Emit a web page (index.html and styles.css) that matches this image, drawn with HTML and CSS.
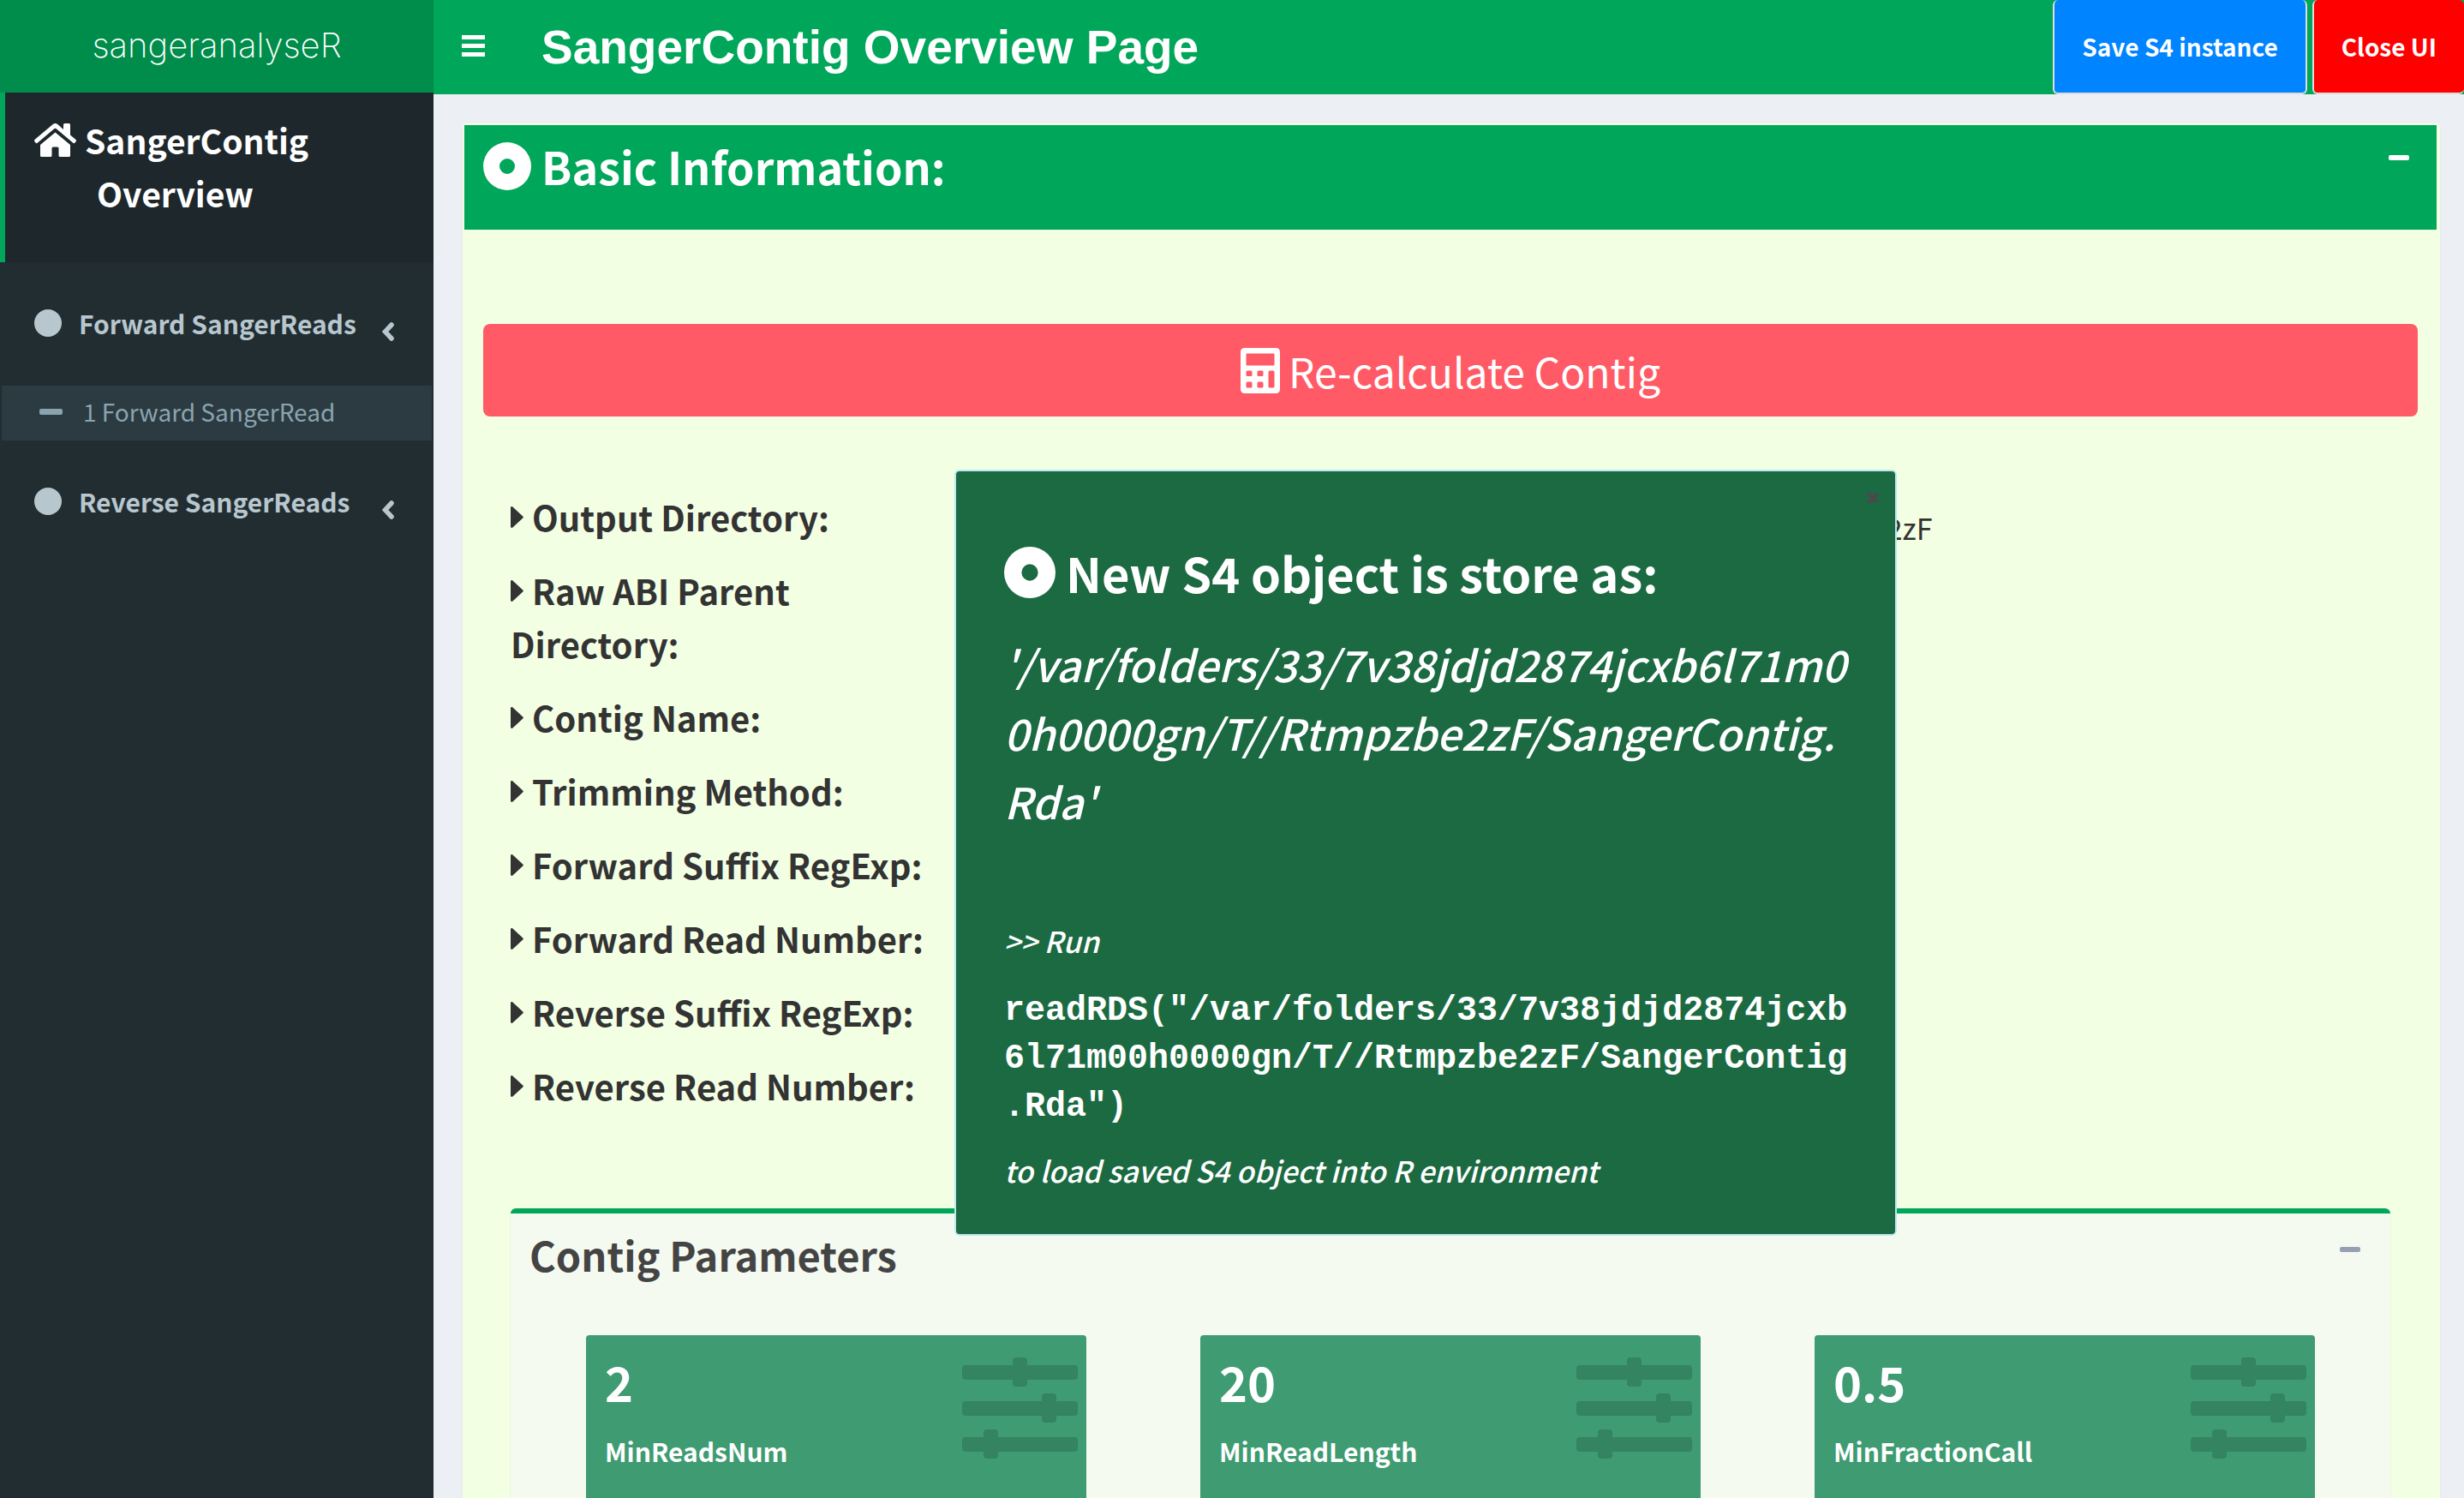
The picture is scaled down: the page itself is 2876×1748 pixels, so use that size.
FILE: index.html
```html
<!DOCTYPE html>
<html lang="en">
<head>
<meta charset="utf-8">
<title>SangerContig Overview Page</title>
<link rel="stylesheet" href="styles.css">
</head>
<body>
<svg class="sprite" aria-hidden="true">
  <symbol id="dot-circle" viewBox="0 0 56 56"><path fill-rule="evenodd" d="M28 0a28 28 0 1 0 0 56a28 28 0 1 0 0-56zM28 19a9 9 0 1 1 0 18a9 9 0 1 1 0-18z"/></symbol>
  <symbol id="caret" viewBox="0 0 15 25"><path d="M0 1.5v22c0 1.3 1.4 1.9 2.4 1l11.9-11c.7-.6.7-1.4 0-2L2.4.5C1.400-.4 0 .2 0 1.500z"/></symbol>
  <symbol id="chevron" viewBox="0 0 14 22"><path d="M11 3L3.500 11L11 19" fill="none" stroke="currentColor" stroke-width="5.500" stroke-linecap="round"/></symbol>
  <symbol id="sliders" viewBox="0 0 135 119"><path d="M4 9h55V4q0-4 4-4h9q4 0 4 4v5h55q4 0 4 4v9q0 4-4 4H76v4q0 4-4 4h-9q-4 0-4-4v-4H4q-4 0-4-4v-9q0-4 4-4zM4 51h89v-5q0-4 4-4h9q4 0 4 4v5h21q4 0 4 4v9q0 4-4 4h-21v4q0 4-4 4h-9q-4 0-4-4v-4H4q-4 0-4-4v-9q0-4 4-4zM4 93h21v-5q0-4 4-4h9q4 0 4 4v5h89q4 0 4 4v9q0 4-4 4H42v4q0 4-4 4h-9q-4 0-4-4v-4H4q-4 0-4-4v-9q0-4 4-4z"/></symbol>
</svg>
<div class="shell">
  <aside class="sidebar">
    <a class="logo" href="#">sangeranalyseR</a>
    <nav class="menu">
      <a class="menu-active" href="#">
        <svg class="icon-home" viewBox="0 0 49 39"><path d="M24.500 0q1.500 0 2.700 1L34 7V1.500q0-1.500 1.500-1.500h5q1.500 0 1.500 1.500V13.500l6.300 5.300q1.200 1.200.2 2.500l-1 1.200q-1.100 1.200-2.500.1L25.700 6.300q-1.200-1-2.400 0L4 22.600q-1.400 1.100-2.500-.1l-1-1.200q-1-1.300.2-2.500L21.800 1Q23 0 24.500 0z"/><path d="M24.500 10.500L7 25v12.500Q7 39 8.500 39H19q1.500 0 1.500-1.500V29q0-1.500 1.500-1.500h5q1.500 0 1.500 1.500v8.500q0 1.500 1.500 1.500h10.500q1.500 0 1.500-1.500V25z"/></svg>
        <span>SangerContig<span class="menu-second">Overview</span></span>
      </a>
      <a class="menu-item" href="#"><span class="bullet"></span><span class="menu-label">Forward SangerReads</span><svg class="chevron"><use href="#chevron"/></svg></a>
      <a class="menu-sub" href="#"><span class="dash"></span>1 Forward SangerRead</a>
      <a class="menu-item" href="#"><span class="bullet"></span><span class="menu-label">Reverse SangerReads</span><svg class="chevron"><use href="#chevron"/></svg></a>
    </nav>
  </aside>
  <main class="main">
    <header class="navbar">
      <button class="toggle" type="button" aria-label="Toggle navigation"><span></span><span></span><span></span></button>
      <h1 class="page-title">SangerContig Overview Page</h1>
      <div class="actions">
        <button class="action save" type="button">Save S4 instance</button>
        <button class="action close-ui" type="button">Close UI</button>
      </div>
    </header>
    <section class="box">
      <header class="box-header">
        <h2 class="box-title"><svg class="icon-dot"><use href="#dot-circle"/></svg>Basic Information:</h2>
        <button class="collapse" type="button" aria-label="Collapse"></button>
      </header>
      <div class="box-body">
        <button class="recalc" type="button">
          <svg class="icon-calc" viewBox="0 0 46 53"><path fill-rule="evenodd" d="M5 0h36q5 0 5 5v43q0 5-5 5H5q-5 0-5-5V5q0-5 5-5zM7.500 6.500q-1 0-1 1v12q0 1 1 1h31q1 0 1-1v-12q0-1-1-1zM8 26.500q-1.500 0-1.500 1.500v3.500q0 1.500 1.500 1.500h4q1.500 0 1.500-1.500V28q0-1.500-1.500-1.500zM21 26.500q-1.500 0-1.500 1.500v3.500q0 1.500 1.500 1.500h4q1.500 0 1.500-1.500V28q0-1.500-1.500-1.500zM34 26.500q-1.500 0-1.500 1.500v17q0 1.500 1.500 1.500h4q1.500 0 1.500-1.500V28q0-1.500-1.500-1.500zM8 39.500q-1.500 0-1.500 1.500v4q0 1.500 1.500 1.500h4q1.500 0 1.500-1.500v-4q0-1.500-1.500-1.500zM21 39.500q-1.500 0-1.500 1.500v4q0 1.500 1.500 1.500h4q1.500 0 1.500-1.500v-4q0-1.500-1.500-1.500z"/></svg>
          Re-calculate Contig
        </button>
        <dl class="info">
          <div class="info-row"><dt><svg class="caret"><use href="#caret"/></svg>Output Directory:</dt><dd>/var/folders/33/7v38jdjd2874jcxb6l71m00h0000gn/T//Rtmpzbe2zF</dd></div>
          <div class="info-row"><dt><svg class="caret"><use href="#caret"/></svg>Raw ABI Parent Directory:</dt></div>
          <div class="info-row"><dt><svg class="caret"><use href="#caret"/></svg>Contig Name:</dt></div>
          <div class="info-row"><dt><svg class="caret"><use href="#caret"/></svg>Trimming Method:</dt></div>
          <div class="info-row"><dt><svg class="caret"><use href="#caret"/></svg>Forward Suffix RegExp:</dt></div>
          <div class="info-row"><dt><svg class="caret"><use href="#caret"/></svg>Forward Read Number:</dt></div>
          <div class="info-row"><dt><svg class="caret"><use href="#caret"/></svg>Reverse Suffix RegExp:</dt></div>
          <div class="info-row"><dt><svg class="caret"><use href="#caret"/></svg>Reverse Read Number:</dt></div>
        </dl>
        <section class="card">
          <header class="card-header">
            <h3 class="card-title">Contig Parameters</h3>
            <button class="collapse muted" type="button" aria-label="Collapse"></button>
          </header>
          <div class="values">
            <div class="value"><div><strong class="number">2</strong><span class="name">MinReadsNum</span></div><svg class="sliders"><use href="#sliders"/></svg></div>
            <div class="value"><div><strong class="number">20</strong><span class="name">MinReadLength</span></div><svg class="sliders"><use href="#sliders"/></svg></div>
            <div class="value"><div><strong class="number">0.5</strong><span class="name">MinFractionCall</span></div><svg class="sliders"><use href="#sliders"/></svg></div>
          </div>
        </section>
      </div>
    </section>
  </main>
</div>
<div class="notice" role="dialog" aria-labelledby="notice-title">
  <button class="notice-close" type="button" aria-label="Close"><svg viewBox="0 0 16 16"><path d="M2.500 2.500l11 11M13.500 2.500l-11 11" stroke="currentColor" stroke-width="4.500"/></svg></button>
  <h2 class="notice-title" id="notice-title"><svg class="icon-dot large"><use href="#dot-circle"/></svg>New S4 object is store as:</h2>
  <p class="notice-path">'/var/folders/33/7v38jdjd2874jcxb6l71m0<br>0h0000gn/T//Rtmpzbe2zF/SangerContig.<br>Rda'</p>
  <p class="notice-text">&gt;&gt; Run</p>
  <code class="notice-code">readRDS("/var/folders/33/7v38jdjd2874jcxb<br>6l71m00h0000gn/T//Rtmpzbe2zF/SangerContig<br>.Rda")</code>
  <p class="notice-text">to load saved S4 object into R environment</p>
</div>
</body>
</html>
```
FILE: styles.css
```css
* { box-sizing: border-box; }
body {
  margin: 0;
  background: #ecf0f5;
  color: #333;
  font-family: "Noto Sans CJK SC", "Noto Sans", sans-serif;
}
h1, h2, h3, p, dl, dt, dd { margin: 0; }
a { color: inherit; text-decoration: none; }
button { font-family: inherit; border: 0; padding: 0; background: none; color: inherit; }
svg { fill: currentColor; flex: none; }
.sprite { display: none; }

.shell { display: grid; grid-template-columns: 506px 1fr; height: 100vh; overflow: hidden; }

/* Sidebar */
.sidebar { background: #222d32; color: #b8c7ce; }
.logo {
  display: block;
  height: 108px;
  background: #008d4c;
  color: #fff;
  text-align: center;
  font: 200 40px/106px Inter, "Liberation Sans", sans-serif;
}
.menu-active {
  display: flex;
  align-items: flex-start;
  gap: 10px;
  height: 198px;
  padding: 24px 0 0 34px;
  border-left: 6px solid #00a65a;
  background: #1e282c;
  color: #fff;
  font-size: 39px;
  font-weight: 700;
  line-height: 62px;
}
.icon-home { width: 49px; height: 39px; margin-top: 12px; }
.menu-second { display: block; padding-left: 14px; }
.menu-item {
  display: flex;
  align-items: center;
  padding: 49px 46px 51px 40px;
  font-size: 30px;
  font-weight: 700;
  line-height: 44px;
}
.bullet { width: 32px; height: 32px; margin-right: 20px; border-radius: 50%; background: currentColor; }
.menu-label { flex: 1; }
.chevron { width: 14px; height: 22px; margin-top: 20px; }
.menu-sub {
  display: flex;
  align-items: center;
  gap: 24px;
  margin: 0 2px;
  padding: 0 0 4px 44px;
  background: #2c3b41;
  color: #8aa4af;
  font-size: 28px;
  line-height: 60px;
}
.dash { width: 27px; height: 7px; border-radius: 2px; background: currentColor; }

/* Top bar */
.main { min-width: 0; }
.navbar { display: flex; height: 110px; background: #00a65a; color: #fff; }
.toggle { display: flex; flex-direction: column; justify-content: center; gap: 5px; width: 27px; margin: 0 66px 4px 33px; }
.toggle span { width: 27px; height: 5px; background: #fff; }
.page-title { flex: 1; font: 700 55px/110px "Liberation Sans", Arial, sans-serif; }
.actions { display: flex; gap: 6px; }
.action {
  padding: 0 32px;
  border: 2px solid #ddd;
  border-top: 0;
  border-radius: 6px;
  font-size: 28px;
  font-weight: 700;
}
.save { background: #0084ff; }
.close-ui { border-right: 0; background: #f00; }

/* Main box */
.box {
  margin: 34px 28px 0 34px;
  border: 2px solid #f3ffe3;
  border-right-width: 4px;
  border-radius: 6px;
  background: #f3ffe3;
  box-shadow: 0 2px 2px rgba(0, 0, 0, 0.1);
}
.box-header {
  display: flex;
  justify-content: space-between;
  align-items: flex-start;
  height: 122px;
  padding: 8px 32px 0 22px;
  background: #00a65a;
  color: #fff;
}
.box-title { display: flex; align-items: center; gap: 12px; font-size: 52px; line-height: 80px; }
.icon-dot { width: 56px; height: 56px; }
.icon-dot.large { width: 60px; height: 60px; }
.collapse { width: 24px; height: 6px; margin-top: 27px; border-radius: 2px; background: currentColor; }
.box-body { padding: 110px 22px 60px; }
.recalc {
  display: flex;
  align-items: center;
  justify-content: center;
  gap: 10px;
  width: 100%;
  height: 108px;
  border-radius: 8px;
  background: #ff5a65;
  color: #fff;
  font-size: 48px;
  line-height: 68px;
}
.icon-calc { width: 46px; height: 53px; }
.info { display: flex; flex-direction: column; gap: 24px; margin: 86px 32px 0; line-height: 62px; }
.info-row { display: flex; }
.info dt { width: 500px; font-size: 40px; font-weight: 700; }
.info dd { margin-left: 110px; padding-top: 26px; font-size: 34px; line-height: 36px; }
.caret { width: 15px; height: 25px; margin-right: 10px; vertical-align: 4px; }

/* Parameters card */
.card {
  margin: 112px 32px 0;
  border-top: 6px solid #00a65a;
  border-radius: 6px;
  background: #f5faf0;
  box-shadow: 0 2px 2px rgba(0, 0, 0, 0.1);
}
.card-header { display: flex; justify-content: space-between; align-items: flex-start; padding: 14px 35px 0 22px; color: #444; }
.card-title { font-size: 47px; line-height: 68px; }
.collapse.muted { margin-top: 25px; background: #97a0b3; }
.values { display: grid; grid-template-columns: repeat(3, 1fr); gap: 133px; padding: 60px 88px; }
.value {
  display: flex;
  justify-content: space-between;
  min-height: 230px;
  padding: 18px 10px 18px 22px;
  border-radius: 4px;
  background: #3e9b72;
  color: #fff;
}
.number { display: block; font-size: 56px; line-height: 72px; }
.name { display: block; margin-top: 23px; font-size: 30px; font-weight: 700; line-height: 44px; }
.sliders { width: 135px; height: 119px; margin-top: 8px; color: rgba(0, 0, 0, 0.15); }

/* Notification */
.notice {
  position: fixed;
  top: 548px;
  left: calc(50% - 324px);
  width: 1100px;
  padding: 78px 40px 46px 56px;
  border: 2px solid #bce8f1;
  border-radius: 6px;
  background: #1c6a42;
  color: #fff;
}
.notice-close { position: absolute; top: 23px; right: 18px; width: 16px; height: 16px; color: #4a4a4c; }
.notice-close svg { display: block; width: 16px; height: 16px; }
.notice-title { display: flex; align-items: center; gap: 12px; font-size: 56px; line-height: 80px; }
.notice-path { margin: 26px 0 96px; font-size: 50px; font-style: italic; font-weight: 500; line-height: 80px; white-space: nowrap; }
.notice-text { font-size: 34px; font-style: italic; font-weight: 500; line-height: 56px; }
.notice-code { display: block; margin: 26px 0 18px; font: 700 40px/56px "Liberation Mono", "Courier New", monospace; white-space: nowrap; }
```
